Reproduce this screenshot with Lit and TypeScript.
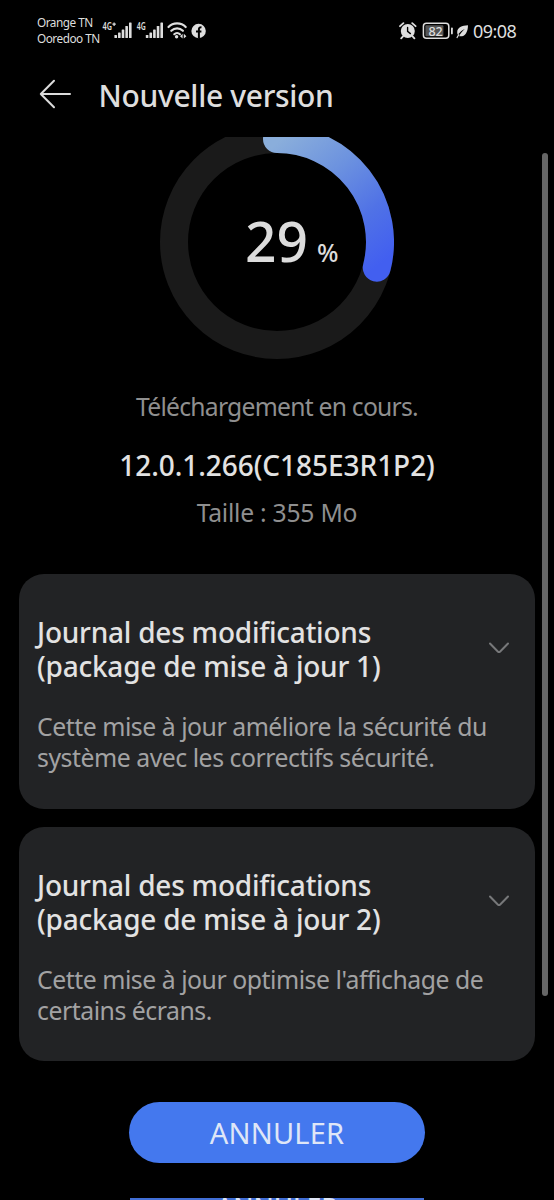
import { LitElement, html, css, svg } from "lit";
import { customElement, property } from "lit/decorators.js";

const bars = (x: number) =>
  [3, 5.5, 8.5, 12, 15.5].map(
    (h, i) => svg`<rect x=${x + i * 3.65} y=${38 - h} width="2.6" height=${h} rx="0.6" />`
  );

@customElement("status-bar")
class StatusBar extends LitElement {
  static styles = css`
    :host {
      display: flex;
      height: 62px;
      padding: 0 36px 0 37px;
      color: #dedede;
      font-family: "Noto Sans", sans-serif;
    }
    svg { display: block; flex: none; height: 62px; fill: currentColor; }
    .net { font: 600 10.5px "Noto Sans", sans-serif; }
    .carriers {
      width: 65px;
      padding-top: 14px;
      font-size: 11.8px;
      line-height: 16px;
      letter-spacing: -0.5px;
      white-space: nowrap;
    }
    .spacer { flex: 1; }
    .level { font: 500 13px "Noto Sans", sans-serif; }
    .time {
      width: 45px;
      margin-left: 4px;
      padding-top: 18.5px;
      font-size: 18px;
      line-height: 25px;
      letter-spacing: -0.55px;
      white-space: nowrap;
    }
  `;
  render() {
    return html`
      <div class="carriers">
        <div>Orange TN</div>
        <div>Ooredoo TN</div>
      </div>
      <svg width="33" viewBox="102 0 33 62">
        <text class="net" x="102.5" y="29.6" textLength="9.5" lengthAdjust="spacingAndGlyphs">4G</text>
        <path d="M112.4 24.2h3.4M114.1 22.5v3.4" stroke="currentColor" stroke-width="1.2" />
        ${bars(114.4)}
      </svg>
      <svg width="31" viewBox="135 0 31 62">
        <text class="net" x="136.7" y="29.6" textLength="9" lengthAdjust="spacingAndGlyphs">4G</text>
        ${bars(145.8)}
      </svg>
      <svg width="24" viewBox="166 0 24 62">
        <g fill="none" stroke="currentColor" stroke-width="2.2" stroke-linecap="round">
          <path d="M168.5 27C173 22.3 181.2 22.3 185.7 27" />
          <path d="M171.3 30.8C174.6 27.5 179.6 27.5 182.9 30.8" />
          <path d="M174.3 34.2C175.9 32.6 178.3 32.6 179.9 34.2" />
        </g>
        <circle cx="176.6" cy="36.8" r="1.7" />
        <path d="M180 36.2l2.6-2.4v4.8zM186.4 36.200l-2.600-2.400v4.800z" />
      </svg>
      <svg width="18" viewBox="190 0 18 62">
        <circle cx="198.6" cy="31" r="7.2" />
        <path
          d="M198.9 38.4v-9c0-1.6 .8-2.3 2.6-2.2M196 31.4h5.4"
          fill="none" stroke="#000" stroke-width="2"
        />
      </svg>
      <div class="spacer"></div>
      <svg width="20" viewBox="400 0 20 62">
        <circle cx="408.8" cy="31" r="7" />
        <path d="M401 26.2l3.4-3M416.6 26.2l-3.4-3M404 36.4l-1.8 2M413.6 36.4l1.8 2"
          stroke="currentColor" stroke-width="1.8" stroke-linecap="round" />
        <path d="M408.6 27.4v4l2.8 2.2" fill="none" stroke="#000" stroke-width="1.4" stroke-linecap="round" />
      </svg>
      <svg width="36" viewBox="420 0 36 62">
        <rect x="424.4" y="23.2" width="25.4" height="15" rx="3" fill="none" stroke="currentColor" stroke-width="1.5" />
        <rect x="426.4" y="25.2" width="18" height="11" rx="1" fill="#555" />
        <rect x="452" y="27.4" width="1.8" height="7" rx="0.8" />
        <text class="level" x="429.4" y="35.5" textLength="14.4" lengthAdjust="spacingAndGlyphs">82</text>
      </svg>
      <svg width="14" viewBox="457 0 14 62">
        <path d="M470 25.2C464 25.4 459.2 27.4 459.2 32.2c0 1.2.2 1.900.6 2.600C462 32 464 30.400 466.800 29 464.600 31.200 462.400 33 461.200 36.200 466.500 37.200 469.900 33 470 25.200z" />
        <path d="M459 37.600l1.800-3" stroke="currentColor" stroke-width="1.100" stroke-linecap="round" />
      </svg>
      <div class="time">09:08</div>
    `;
  }
}

@customElement("progress-ring")
class ProgressRing extends LitElement {
  @property({ type: Number }) value = 0;
  static styles = css`
    :host { display: block; height: 222px; }
    svg { display: block; margin: 0 auto; }
    text { font-family: "Noto Sans", sans-serif; font-weight: 500; fill: #dcdcdc; }
    .num { font-size: 56px; }
    .pct { font-size: 25px; }
  `;
  render() {
    const r = 103;
    return html`
      <svg width="234" height="222" viewBox="160 137 234 222">
        <defs>
          <linearGradient id="sweep" gradientUnits="userSpaceOnUse" x1="268" y1="150" x2="368" y2="274">
            <stop offset="0" stop-color="#8aaedb" />
            <stop offset="0.35" stop-color="#6d93df" />
            <stop offset="0.7" stop-color="#5072e6" />
            <stop offset="1" stop-color="#425ff0" />
          </linearGradient>
        </defs>
        <circle cx="277" cy="242" r=${r} fill="none" stroke="#1a1a1a" stroke-width="28" />
        <path d=${this.arc(r)} fill="none" stroke="url(#sweep)" stroke-width="28" stroke-linecap="round" />
        <text class="num" x="245" y="261.5" textLength="63" lengthAdjust="spacingAndGlyphs">${this.value}</text>
        <text class="pct" x="317" y="261.5" textLength="21.5" lengthAdjust="spacingAndGlyphs">%</text>
      </svg>
    `;
  }
  private arc(r: number) {
    const a = (this.value / 100) * 2 * Math.PI;
    const x = 277 + r * Math.sin(a);
    const y = 242 - r * Math.cos(a);
    return `M277 ${242 - r}A${r} ${r} 0 ${this.value > 50 ? 1 : 0} 1 ${x} ${y}`;
  }
}

@customElement("change-card")
class ChangeCard extends LitElement {
  @property({ type: Array }) heading: string[] = [];
  @property({ type: Array }) body: string[] = [];
  static styles = css`
    :host {
      display: block;
      box-sizing: border-box;
      height: 234.5px;
      padding: 41px 26px 0 18.5px;
      border-radius: 25px;
      background: #222325;
      font-family: "Noto Sans", sans-serif;
      white-space: nowrap;
    }
    .top { display: flex; justify-content: space-between; align-items: center; }
    .title { font-size: 28px; font-weight: 500; line-height: 34px; letter-spacing: -0.23px; color: #e2e2e2; }
    .body { margin-top: 28.4px; font-size: 24.8px; line-height: 30.4px; letter-spacing: -0.47px; color: #a2a2a3; }
    svg { display: block; margin-top: -2px; fill: none; stroke: #77787a; stroke-width: 2; stroke-linecap: round; stroke-linejoin: round; }
  `;
  render() {
    return html`
      <div class="top">
        <div class="title">${this.heading.map((t) => html`<div>${t}</div>`)}</div>
        <svg width="20" height="12" viewBox="0 0 20 12"><path d="M1 1.5L8.8 9.5Q10 10.6 11.2 9.5L19 1.5" /></svg>
      </div>
      <div class="body">${this.body.map((t) => html`<div>${t}</div>`)}</div>
    `;
  }
}

@customElement("app-root")
class AppRoot extends LitElement {
  static styles = css`
    :host {
      display: flex;
      flex-direction: column;
      width: 554px;
      height: 1200px;
      overflow: hidden;
      background: #000;
      font-family: "Noto Sans", sans-serif;
      white-space: nowrap;
    }
    header { display: flex; height: 75px; padding-left: 39px; box-sizing: border-box; }
    header svg { display: block; margin-top: 17px; fill: none; stroke: #dcdcdc; stroke-width: 2; stroke-linecap: round; stroke-linejoin: round; }
    h1 { margin: 13.5px 0 0 26.5px; font-size: 30px; font-weight: 500; line-height: 40px; letter-spacing: -0.32px; color: #dedede; }
    main { position: relative; flex: 1; overflow: hidden; }
    .info { display: flex; flex-direction: column; align-items: center; padding-top: 31px; }
    .state { font-size: 24.7px; line-height: 34px; letter-spacing: -0.76px; color: #8f8f8f; }
    .version { margin-top: 22px; font-size: 28px; font-weight: 500; line-height: 38px; letter-spacing: -0.05px; color: #e2e2e2; }
    .size { margin-top: 12px; font-size: 24.7px; line-height: 34px; letter-spacing: -0.25px; color: #8f8f8f; }
    .cards { display: flex; flex-direction: column; gap: 18.3px; padding: 44px 19px 0 18.5px; }
    .cancel {
      display: block;
      width: 296px;
      height: 61px;
      margin: 40.5px auto 0;
      padding: 1px 0 0;
      border: 0;
      border-radius: 31px;
      background: #4478ee;
      color: #dfe6f7;
      font: 400 29px/60px "Noto Sans", sans-serif;
      letter-spacing: 0.2px;
    }
    .next {
      width: 294px;
      height: 3px;
      margin: 35.2px auto 0;
      overflow: hidden;
      background: #426fd6;
      color: #dfe6f7;
      text-align: center;
      font-size: 26px;
      font-weight: 500;
      line-height: 16px;
    }
    .scrollbar { position: absolute; top: 16px; right: 6.5px; width: 6px; height: 843px; border-radius: 3px; background: #666; }
  `;
  render() {
    return html`
      <status-bar></status-bar>
      <header>
        <svg width="33" height="30" viewBox="0 0 33 30"><path d="M15 1.8L1.8 15L15 28.2M1.8 15H31" /></svg>
        <h1>Nouvelle version</h1>
      </header>
      <main>
        <progress-ring .value=${29}></progress-ring>
        <div class="info">
          <div class="state">Téléchargement en cours.</div>
          <div class="version">12.0.1.266(C185E3R1P2)</div>
          <div class="size">Taille : 355 Mo</div>
        </div>
        <div class="cards">
          <change-card
            .heading=${["Journal des modifications", "(package de mise à jour 1)"]}
            .body=${["Cette mise à jour améliore la sécurité du", "système avec les correctifs sécurité."]}
          ></change-card>
          <change-card
            .heading=${["Journal des modifications", "(package de mise à jour 2)"]}
            .body=${["Cette mise à jour optimise l'affichage de", "certains écrans."]}
          ></change-card>
        </div>
        <button class="cancel">ANNULER</button>
        <div class="next">ANNULER</div>
        <div class="scrollbar"></div>
      </main>
    `;
  }
}
